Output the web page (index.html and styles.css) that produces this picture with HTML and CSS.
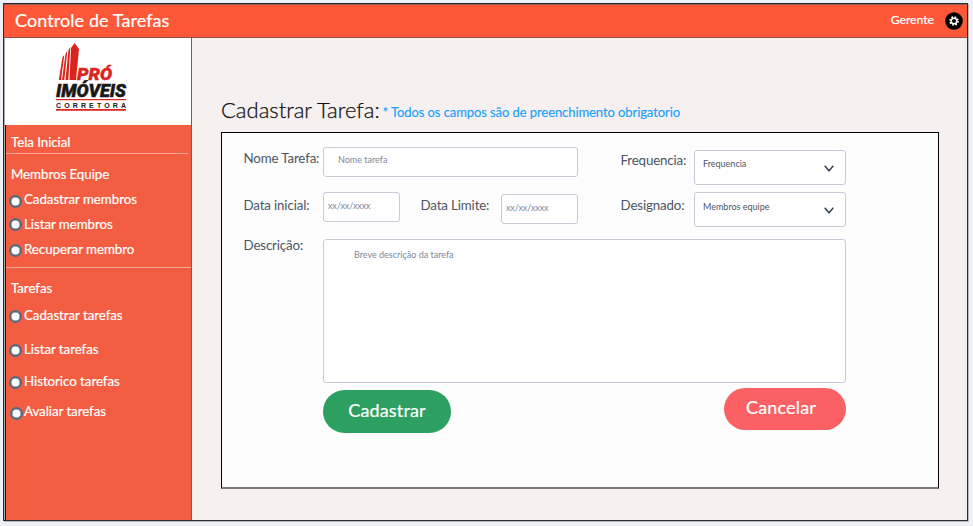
FILE: index.html
```html
<!DOCTYPE html>
<html lang="pt-BR">
<head>
<meta charset="utf-8">
<title>Controle de Tarefas</title>
<link rel="stylesheet" href="styles.css">
</head>
<body>
<div class="app">
  <header class="topbar">
    <h1 class="brand">Controle de Tarefas</h1>
    <span class="role">Gerente</span>
    <svg class="gear" viewBox="0 0 18 18"><circle cx="9" cy="9" r="8.8" fill="#000"/><circle cx="9" cy="9" r="4" fill="none" stroke="#fff" stroke-width="1.6" stroke-dasharray="1.7 1.442"/><circle cx="9" cy="9" r="2.8" fill="none" stroke="#fff" stroke-width="1.5"/></svg>
  </header>
  <div class="body">
    <aside class="sidebar">
      <div class="logo">
        <svg width="76" height="74" viewBox="54 40 76 74">
          <g fill="#d9251d">
            <path d="M69.500 80 71 48 74.500 43 79 49 76 80z"/>
            <path d="M65.500 80 68.500 50 70.300 47 68.300 80z"/>
            <path d="M62 80 65.500 54 67.300 51 64.300 80z"/>
            <path d="M58.800 80 62.500 57 64.300 55 61 80z"/>
            <path d="M56 99h70v1.200H56zM56 109h70v1.800H56z"/>
          </g>
          <text class="logo-word pro" x="77" y="79.500" textLength="35" lengthAdjust="spacingAndGlyphs">PRÓ</text>
          <text class="logo-word dark" x="56" y="96.800" textLength="70" lengthAdjust="spacingAndGlyphs">IMÓVEIS</text>
          <text class="logo-sub" x="56" y="107.700" textLength="70">CORRETORA</text>
        </svg>
      </div>
      <nav class="menu">
        <a class="head home">Tela Inicial</a>
        <hr class="rule short">
        <a class="head team">Membros Equipe</a>
        <a class="item m1"><i class="dot"></i><span>Cadastrar membros</span></a>
        <a class="item m2"><i class="dot"></i><span>Listar membros</span></a>
        <a class="item m3"><i class="dot"></i><span>Recuperar membro</span></a>
        <hr class="rule">
        <a class="head tasks">Tarefas</a>
        <a class="item t1"><i class="dot"></i><span>Cadastrar tarefas</span></a>
        <a class="item t2"><i class="dot"></i><span>Listar tarefas</span></a>
        <a class="item t3"><i class="dot"></i><span>Historico tarefas</span></a>
        <a class="item t4"><i class="dot"></i><span>Avaliar tarefas</span></a>
      </nav>
    </aside>
    <main class="main">
      <div class="title-row">
        <h2 class="title">Cadastrar Tarefa:</h2>
        <span class="note">* Todos os campos são de preenchimento obrigatorio</span>
      </div>
      <form class="panel">
        <div class="row first">
          <label class="label c1">Nome Tarefa:</label>
          <div class="field name">Nome tarefa</div>
          <label class="label c3 lower">Frequencia:</label>
          <div class="select lower">Frequencia<svg class="chev" viewBox="0 0 10 7"><path d="M.7.7 5 5.800 9.300.7"/></svg></div>
        </div>
        <div class="row second">
          <label class="label c1">Data inicial:</label>
          <div class="field date">xx/xx/xxxx</div>
          <label class="label c2">Data Limite:</label>
          <div class="field date end">xx/xx/xxxx</div>
          <label class="label c3">Designado:</label>
          <div class="select">Membros equipe<svg class="chev" viewBox="0 0 10 7"><path d="M.7.7 5 5.800 9.300.7"/></svg></div>
        </div>
        <div class="row third">
          <label class="label c1">Descrição:</label>
          <div class="field area">Breve descrição da tarefa</div>
        </div>
        <div class="actions">
          <button type="button" class="btn save">Cadastrar</button>
          <button type="button" class="btn cancel">Cancelar</button>
        </div>
      </form>
    </main>
  </div>
</div>
</body>
</html>
```
FILE: styles.css
```css
* { box-sizing: border-box; }
body {
  margin: 0;
  padding: 3px 0 0 3px;
  height: 526px;
  overflow: hidden;
  background: #edf1f6;
  font-family: Lato, "Liberation Sans", sans-serif;
  font-size: 13.3px;
  color: #4b5563;
}
h1, h2 { margin: 0; font-weight: 400; }
.app {
  width: 965px;
  height: 518px;
  border: 1px solid #2c2c30;
  background: #f6f0f0;
  box-shadow: 1px 1px 0 #b9bbbf;
}
.topbar {
  display: flex;
  align-items: center;
  height: 34px;
  padding: 0 4px 0 11px;
  background: #ff5838;
  border-top: 1px solid #8e5a55;
  border-bottom: 1px solid #944d42;
  color: #fff;
}
.brand { margin-top: -2px; font-size: 18px; line-height: 32px; letter-spacing: .08px; -webkit-text-stroke: .2px #fff; }
.role { margin: -3px 11px 0 auto; font-size: 12.2px; -webkit-text-stroke: .2px #fff; }
.gear { width: 18px; height: 18px; }
.body { display: flex; height: 482px; }
.sidebar {
  width: 188px;
  border-left: 1px solid #a8a8a8;
  border-right: 1px solid #7d5a55;
}
.logo {
  height: 87px;
  padding: 2px 0 0 49px;
  background: #fff;
}
.logo svg { display: block; }
.logo-word { font: italic 900 18px Roboto, "Liberation Sans", sans-serif; }
.pro { font-size: 17px; fill: #d9251d; stroke: #d9251d; stroke-width: .4; }
.dark { fill: #1b1714; stroke: #1b1714; stroke-width: .5; }
.logo-sub { font: 700 7px "Liberation Sans", sans-serif; fill: #1b1714; }
.menu {
  height: 395px;
  background: #f35d41;
  border-left: 1px solid #201010;
  color: #fff;
  display: flex;
  flex-direction: column;
  letter-spacing: -.04px;
  -webkit-text-stroke: .2px #fff;
}
.menu a { line-height: 16px; white-space: nowrap; }
.head { padding-left: 5px; }
.home { margin-top: 9px; }
.rule { width: 100%; height: 1px; margin: 3px 0 0; border: 0; background: #f9a899; flex: none; }
.short { width: 182px; }
.team { margin-top: 12px; }
.item { display: flex; gap: 2px; height: 16px; padding-left: 3px; }
.dot {
  flex: none;
  width: 13px;
  height: 13px;
  margin: 3px 0 0;
  border: 2px solid #596a7b;
  border-radius: 50%;
  background: #fff;
  box-shadow: inset 0 0 0 .5px #596a7b;
}
.m1 { margin-top: 9px; }
.m1 .dot { margin-top: 4px; }
.m2 { margin-top: 9px; }
.m2 .dot { margin-top: 2px; }
.m3 { margin-top: 9px; }
.m3 + .rule { margin-top: 10px; }
.tasks { margin-top: 12px; }
.t1 { margin-top: 11px; }
.t2 { margin-top: 18px; }
.t3 { margin-top: 16px; }
.t4 { margin-top: 14px; }
.t4 .dot { margin: 4px -1px 0 1px; }
.main { padding: 60px 0 0 29px; }
.title-row { display: flex; align-items: baseline; gap: 3px; height: 34px; white-space: nowrap; }
.title { margin-top: -1px; font-size: 22px; line-height: 26px; font-weight: 300; color: #111; -webkit-text-stroke: .25px #111; }
.note { position: relative; top: -1px; font-size: 13px; letter-spacing: -.08px; color: #18a0fb; -webkit-text-stroke: .15px #18a0fb; }
.panel {
  width: 718px;
  height: 357px;
  padding: 14px 0 0 21px;
  background: #fdfdfd;
  border: 1px solid #000;
  border-bottom: 2px solid #7d7a76;
}
.row { display: flex; align-items: flex-start; }
.first { height: 45px; }
.second { height: 47px; }
.third { height: 149px; }
.label { flex: none; line-height: 18px; margin-top: 2px; padding-left: .5px; letter-spacing: -.14px; white-space: nowrap; }
.second .label { margin-top: 4px; }
.third .label { margin-top: -3px; }
.c1 { width: 80px; }
.c2 { width: 81px; margin-left: 20px; }
.c3 { width: 74px; margin-left: 42px; }
.label.lower { margin-top: 4px; }
.field, .select {
  flex: none;
  border: 1px solid #c5ccd8;
  border-radius: 3px;
  background: #fff;
  font-size: 9px;
  white-space: nowrap;
}
.field { color: #7c89a0; }
.name { width: 255px; height: 30px; padding-left: 14px; line-height: 24px; }
.date { width: 77px; height: 30px; padding-left: 4px; line-height: 26px; letter-spacing: -.15px; }
.end { margin-top: 2px; line-height: 25px; }
.area { width: 523px; height: 144px; padding-left: 30px; line-height: 30px; }
.select {
  display: flex;
  justify-content: space-between;
  width: 152px;
  height: 35px;
  padding: 0 11px 0 8px;
  line-height: 28px;
}
.select.lower { margin-top: 3px; line-height: 26px; }
.chev { width: 10px; height: 7px; margin-top: 14px; fill: none; stroke: #333f4d; stroke-width: 1.4; }
.actions { display: flex; justify-content: space-between; width: 603px; padding-left: 80px; }
.btn {
  border: 0;
  color: #fff;
  font-family: inherit;
  font-size: 18px;
  letter-spacing: .15px;
  -webkit-text-stroke: .2px #fff;
}
.save { width: 128px; height: 43px; margin-top: 2px; padding: 0 8px 4px; border-radius: 22px; background: #2d9f61; }
.cancel { width: 122px; height: 42px; border-radius: 21px; background: #fb6064; padding: 0 14px 4px 6px; }
```
